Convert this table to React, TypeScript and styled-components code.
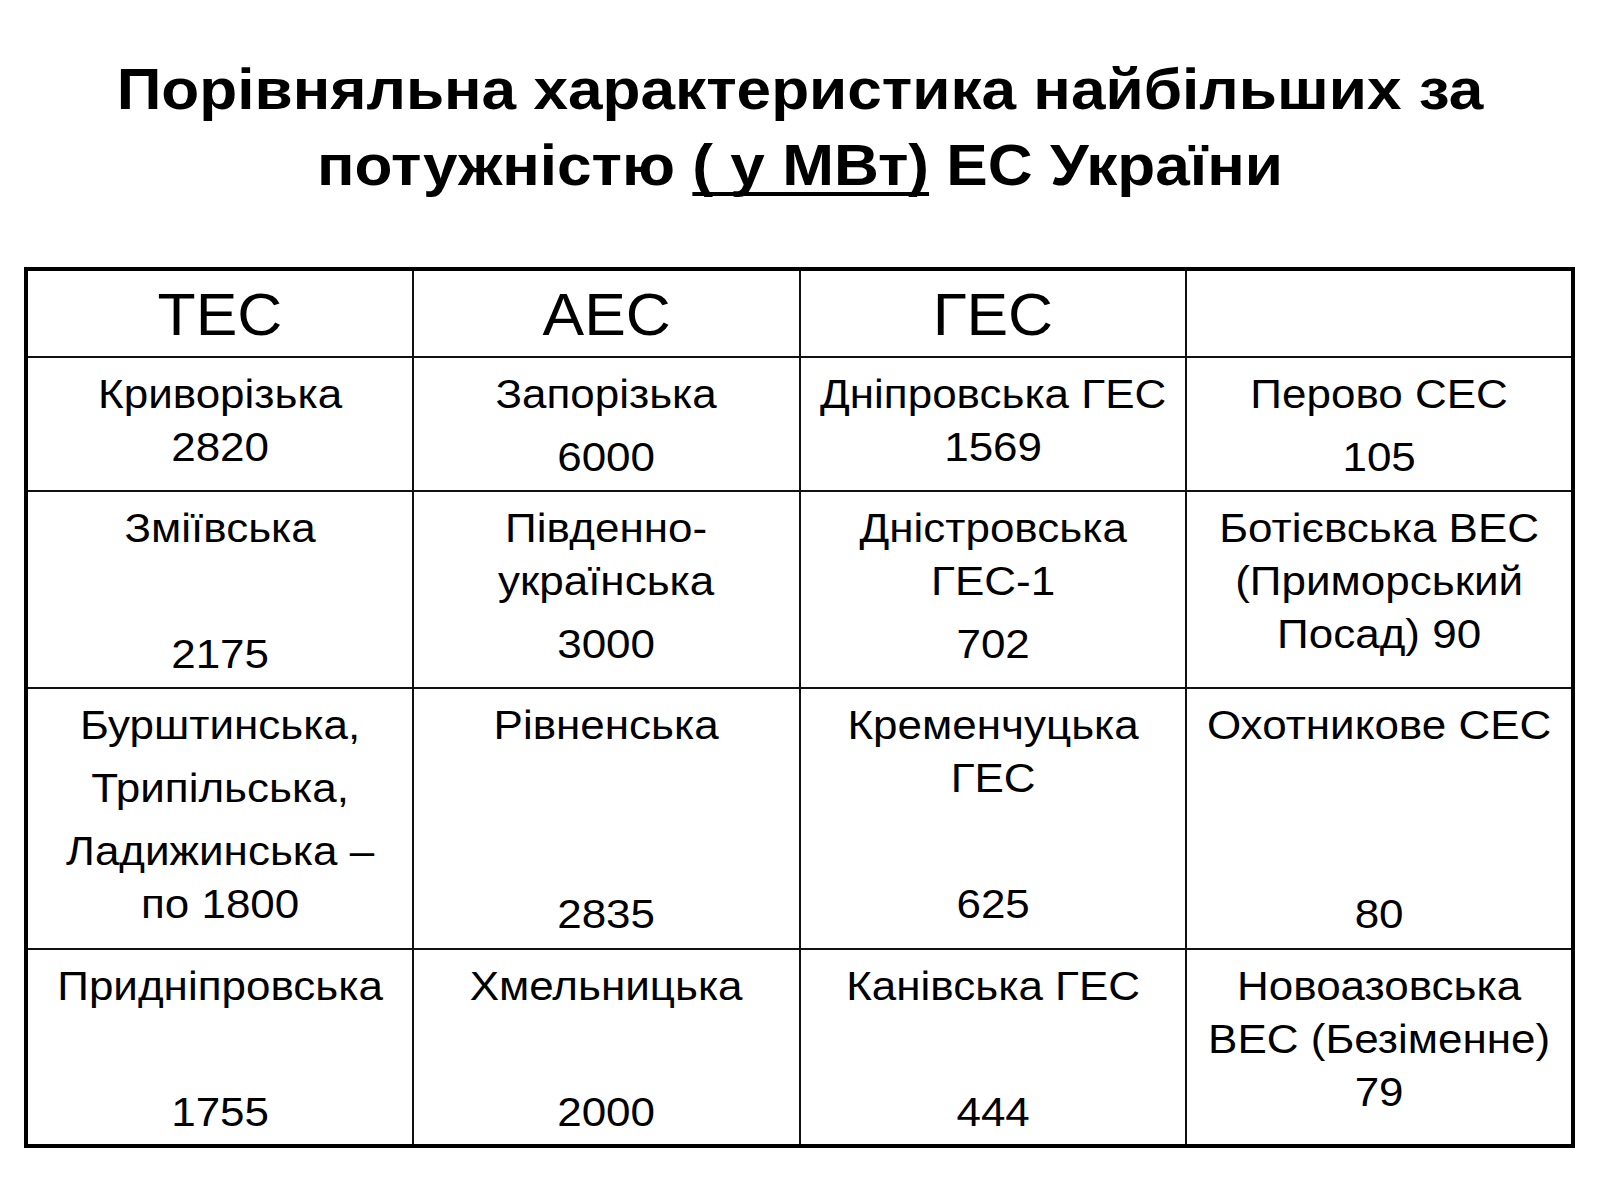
import React from "react";
import styled, { createGlobalStyle } from "styled-components";

const GlobalStyle = createGlobalStyle`
  html, body {
    margin: 0;
    padding: 0;
    background: #ffffff;
  }
  body {
    font-family: "Liberation Sans", Arial, sans-serif;
    color: #000000;
  }
`;

const Page = styled.div`
  width: 1600px;
  height: 1200px;
  background: #ffffff;
  display: flex;
  flex-direction: column;
  align-items: flex-start;
`;

const Title = styled.h1`
  width: 1600px;
  margin: 0;
  padding-top: 51px;
  font-family: "Liberation Sans", Arial, sans-serif;
  font-weight: 700;
  font-size: 57px;
  line-height: 76px;
  text-align: center;
  color: #000;
  transform: scaleX(1.09);
  transform-origin: 800px 0;
`;

const Underlined = styled.span`
  text-decoration: underline;
  text-decoration-thickness: 4px;
  text-underline-offset: 7px;
  text-decoration-skip-ink: none;
`;

const Table = styled.div`
  margin: 64px 0 0 24px;
  width: 1551px;
  box-sizing: border-box;
  border: 4px solid #000;
  background: #111;
  display: grid;
  grid-template-columns: repeat(4, 1fr);
  grid-template-rows: 85px 132px 195px 259px 194px;
  gap: 2px;
`;

const HeadCell = styled.div`
  background: #fff;
  display: flex;
  align-items: center;
  justify-content: center;
  font-size: 60px;
  line-height: 1;
  padding-top: 2px;
`;

const HeadText = styled.span`
  display: inline-block;
  transform: scaleX(1.04);
`;

const Cell = styled.div`
  background: #fff;
  text-align: center;
  font-size: 40px;
  line-height: 53px;
  overflow: hidden;
`;

const Para = styled.p`
  margin: 10px 0 0;
  white-space: pre;
  transform: scaleX(1.1);
  transform-origin: center;
`;

const headers = ["ТЕС", "АЕС", "ГЕС", ""];

const rows: string[][][] = [
  [
    ["Криворізька\n2820"],
    ["Запорізька", "6000"],
    ["Дніпровська ГЕС\n1569"],
    ["Перово СЕС", "105"],
  ],
  [
    ["Зміївська", "", "2175"],
    ["Південно-\nукраїнська", "3000"],
    ["Дністровська\nГЕС-1", "702"],
    ["Ботієвська ВЕС\n(Приморський\nПосад) 90"],
  ],
  [
    ["Бурштинська,", "Трипільська,", "Ладижинська –\nпо 1800"],
    ["Рівненська", "", "", "2835"],
    ["Кременчуцька\nГЕС", "", "625"],
    ["Охотникове СЕС", "", "", "80"],
  ],
  [
    ["Придніпровська", "", "1755"],
    ["Хмельницька", "", "2000"],
    ["Канівська ГЕС", "", "444"],
    ["Новоазовська\nВЕС (Безіменне)\n79"],
  ],
];

export default function App() {
  return (
    <>
      <GlobalStyle />
      <Page>
        <Title>
          Порівняльна характеристика найбільших за
          <br />
          потужністю <Underlined>( у МВт)</Underlined> ЕС України
        </Title>
        <Table>
          {headers.map((h, i) => (
            <HeadCell key={`h${i}`}>
              <HeadText>{h}</HeadText>
            </HeadCell>
          ))}
          {rows.map((row, ri) =>
            row.map((cell, ci) => (
              <Cell key={`c${ri}-${ci}`}>
                {cell.map((p, pi) => (
                  <Para key={pi}>{p === "" ? "\u00a0" : p}</Para>
                ))}
              </Cell>
            ))
          )}
        </Table>
      </Page>
    </>
  );
}
